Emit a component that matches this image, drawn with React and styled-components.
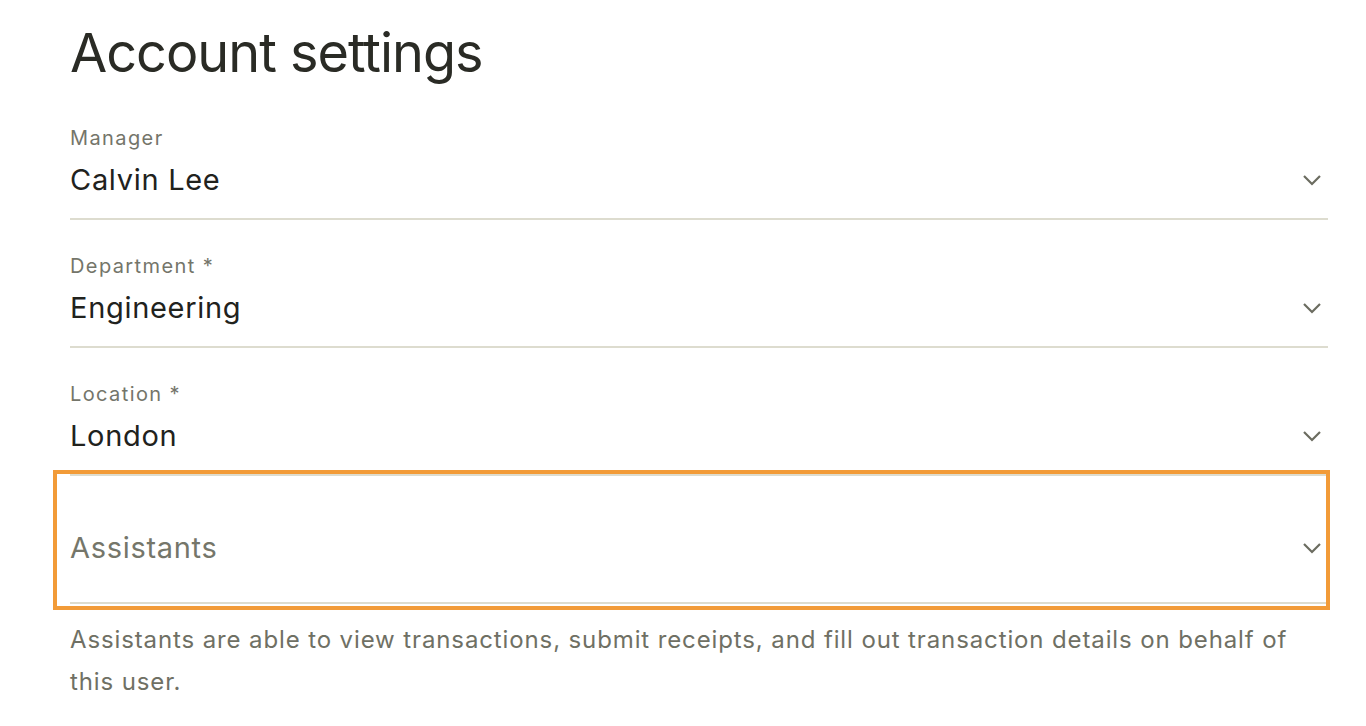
import * as React from 'react';
import styled, { createGlobalStyle } from 'styled-components';

const GlobalStyle = createGlobalStyle`
  html, body {
    margin: 0;
    padding: 0;
    background: #ffffff;
  }
  body {
    font-family: Inter, "Noto Sans", "Liberation Sans", sans-serif;
    -webkit-font-smoothing: antialiased;
  }
`;

const Page = styled.div`
  width: 1258px;
  padding: 21px 0 0 70px;
`;

const Title = styled.h1`
  margin: 0 0 7px;
  font-size: 54px;
  line-height: 64px;
  font-weight: 400;
  letter-spacing: -1px;
  color: #2a2b25;
`;

const Field = styled.div`
  position: relative;
  display: flex;
  flex-direction: column;
  padding: ${({ $empty }) => ($empty ? '54px 0 36px' : '32px 0 20px')};
  border-bottom: 2px solid #dddccf;
  ${({ $focused }) =>
    $focused &&
    `
    &::after {
      content: '';
      position: absolute;
      left: -17px;
      right: -2px;
      top: -6px;
      bottom: -8px;
      border: 4px solid #f29b38;
      pointer-events: none;
    }
  `}
`;

const Label = styled.label`
  font-size: 20px;
  line-height: 28px;
  letter-spacing: 1.4px;
  color: #74756a;
  margin-bottom: 10px;
`;

const Row = styled.div`
  display: flex;
  align-items: center;
  justify-content: space-between;
  height: 36px;
`;

const Value = styled.span`
  font-size: 29px;
  line-height: 36px;
  letter-spacing: 0.7px;
  color: ${({ $placeholder }) => ($placeholder ? '#75766a' : '#21221d')};
`;

const Chevron = styled.svg`
  width: 20px;
  height: 12px;
  margin-right: 6px;
  flex: none;
`;

const Help = styled.p`
  margin: 15px 0 0;
  font-size: 24px;
  line-height: 42px;
  letter-spacing: 0.88px;
  color: #6f7064;
`;

function Arrow() {
  return (
    <Chevron viewBox="0 0 20 12" fill="none">
      <path d="M2 2l8 8 8-8" stroke="#6b6c60" strokeWidth="2.2" />
    </Chevron>
  );
}

function SelectField({ label, value, placeholder, focused }) {
  return (
    <Field $empty={!label} $focused={focused}>
      {label ? <Label>{label}</Label> : null}
      <Row>
        <Value $placeholder={!value}>{value || placeholder}</Value>
        <Arrow />
      </Row>
    </Field>
  );
}

export default function App() {
  return (
    <Page>
      <GlobalStyle />
      <Title>Account settings</Title>
      <SelectField label="Manager" value="Calvin Lee" />
      <SelectField label="Department *" value="Engineering" />
      <SelectField label="Location *" value="London" />
      <SelectField placeholder="Assistants" focused />
      <Help>
        Assistants are able to view transactions, submit receipts, and fill out transaction details on behalf of
        this user.
      </Help>
    </Page>
  );
}
